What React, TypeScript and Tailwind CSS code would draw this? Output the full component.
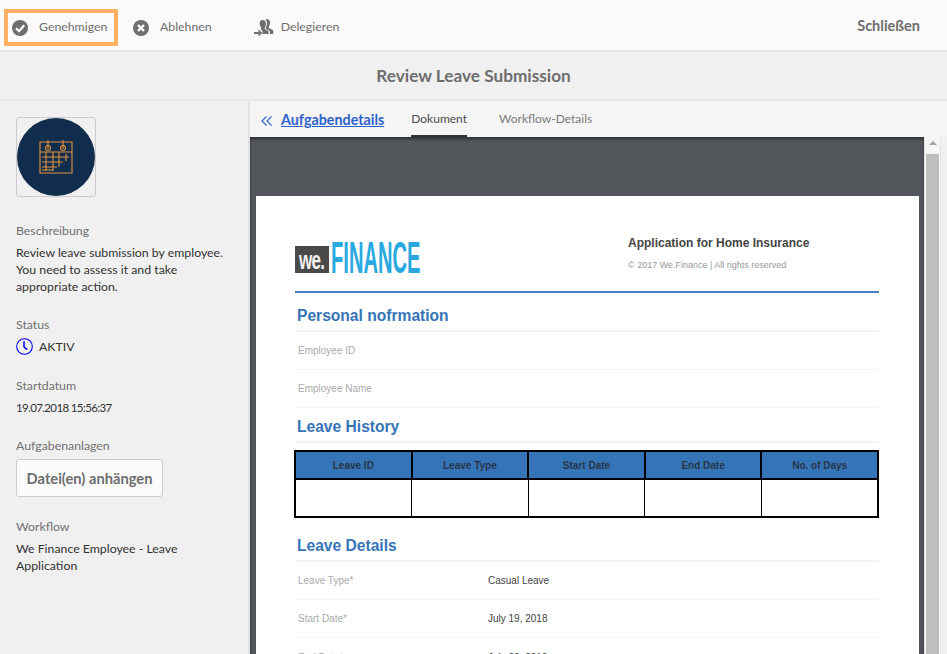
const ui = { fontFamily: 'Lato, "Noto Sans", sans-serif' };
const doc = { fontFamily: '"Liberation Sans", Arial, sans-serif' };

function CheckIcon() {
  return (
    <svg width="16" height="16" viewBox="0 0 16 16">
      <circle cx="8" cy="8" r="8" fill="#6e6e6e" />
      <path d="M4 8.2 7 11.2 12.2 5.2" fill="none" stroke="#fff" strokeWidth="2.2" />
    </svg>
  );
}

function CloseIcon() {
  return (
    <svg width="16" height="16" viewBox="0 0 16 16">
      <circle cx="8" cy="8" r="8" fill="#6e6e6e" />
      <path d="M5 5 11 11M11 5 5 11" fill="none" stroke="#fff" strokeWidth="2.4" />
    </svg>
  );
}

function DelegateIcon() {
  return (
    <svg width="20" height="18" viewBox="0 0 20 18" fill="#6e6e6e">
      <path d="M8.500 1C11 1 12.200 3 12 5.300c-.1 1.400-.7 2.700-1.400 3.500-.2.900.3 1.400 1.200 1.900 1.300.6 2.400 1.100 2.800 1.900V15H8.500v-3L6.500 10.200c.5-.4 1-.7 1-1.400C6.700 8 5.900 6.700 5.700 5.300 5.400 3 6.200 1 8.500 1z" />
      <path d="M12.500 0c2.500 0 3.700 1.800 3.500 4.200-.1 1.400-.7 2.700-1.300 3.500-.2.900.4 1.300 1.200 1.700 1.400.6 2.800 1.200 3.300 2V15h-3.300v-2.500c-.7-1.100-2-1.700-3.300-2.300-.8-.4-1.200-.8-1-1.500.8-1 1.300-2.200 1.400-3.600.1-1.800-.4-3.400-1.600-4.300.2-.5.800-.8 1.600-.8z" />
      <path d="M0 13h4.500v-2.500L8.500 14l-4 3.500V15H0z" />
    </svg>
  );
}

function ClockIcon() {
  return (
    <svg width="17" height="17" viewBox="0 0 17 17" fill="none" stroke="#0000ee">
      <circle cx="8.500" cy="8.500" r="7.800" strokeWidth="1.100" />
      <path d="M8 3.200V9l3.200 2.600" strokeWidth="1.500" />
    </svg>
  );
}

function CalendarIcon() {
  return (
    <svg width="34" height="36" viewBox="0 0 34 36" fill="none" stroke="#e0913f" strokeWidth="1.100">
      <path d="M1 3h32v31H1zM1 13h32" />
      <path d="M9 1v9M24 1v9" />
      <circle cx="9" cy="9" r="2.500" />
      <circle cx="24" cy="9" r="2.500" />
      <path d="M3 18h27M3 23h21M3 28h15M3 31h11M7 13v19M14 13v19M20 13v15M27 15v7" />
    </svg>
  );
}

function Label({ children }: { children: React.ReactNode }) {
  return <div className="text-[12.3px] leading-[17px] text-[#707070]">{children}</div>;
}

const columns = ["Leave ID", "Leave Type", "Start Date", "End Date", "No. of Days"];

function Row({ label, value, line = true }: { label: string; value?: string; line?: boolean }) {
  return (
    <div className={`flex h-[38px] items-center pl-[3px] text-[10px] ${line ? "border-b border-[#f5f5f5]" : ""}`}>
      <div className="w-[190px] text-[#aaaaaa]">{label}</div>
      <div className="text-[#444444]">{value}</div>
    </div>
  );
}

function Heading({ children }: { children: React.ReactNode }) {
  return (
    <div className="flex h-[33px] items-center border-b-2 border-[#f3f3f3] pl-[2px] pt-[2px] text-[15.6px] font-bold text-[#3674b8]">
      {children}
    </div>
  );
}

export default function App() {
  return (
    <div style={ui} className="flex h-[654px] w-[947px] flex-col overflow-hidden bg-[#f0f0f0]">
      <header className="flex h-[52px] shrink-0 items-center border-b-2 border-[#e6e6e6] bg-[#fafafa] pr-[27px] pt-[5px] text-[12.3px] text-[#6e6e6e]">
        <button className="ml-[4px] flex h-[37px] w-[114px] items-center gap-[11px] border-4 border-[#ffb061] pl-[4px]">
          <CheckIcon />
          Genehmigen
        </button>
        <button className="ml-[15px] flex items-center gap-[11px]">
          <CloseIcon />
          Ablehnen
        </button>
        <button className="ml-[42px] flex items-center gap-[7px]">
          <DelegateIcon />
          Delegieren
        </button>
        <button className="-mt-[3px] ml-auto text-[14.5px] font-bold">Schließen</button>
      </header>

      <div className="flex h-[49px] shrink-0 items-center justify-center border-b-2 border-[#e6e6e6] text-[17.2px] font-bold text-[#6e6e6e]">
        Review Leave Submission
      </div>

      <div className="flex min-h-0 flex-1">
        <aside className="w-[250px] shrink-0 border-r-2 border-[#e2e2e2] pl-[16px] pr-[20px] pt-[16px] text-[12.3px] leading-[17px] text-[#323232]">
          <div className="flex h-[80px] w-[80px] items-center justify-center rounded-[3px] border border-[#cccccc]">
            <div className="flex h-[78px] w-[78px] items-center justify-center rounded-full bg-[#112d4e]">
              <CalendarIcon />
            </div>
          </div>

          <div className="mt-[25px]">
            <Label>Beschreibung</Label>
            <p className="mt-[5px]">Review leave submission by employee. You need to assess it and take appropriate action.</p>
          </div>

          <div className="mt-[21px]">
            <Label>Status</Label>
            <div className="mt-[5px] flex items-center gap-[6px]">
              <ClockIcon />
              AKTIV
            </div>
          </div>

          <div className="mt-[22px]">
            <Label>Startdatum</Label>
            <div className="mt-[5px] text-[11.5px] leading-[17px] tracking-[-0.63px]">19.07.2018 15:56:37</div>
          </div>

          <div className="mt-[21px]">
            <Label>Aufgabenanlagen</Label>
            <button className="mt-[5px] h-[38px] w-[147px] rounded-[3px] border border-[#cccccc] bg-[#fafafa] text-[14.7px] font-bold text-[#6e6e6e]">
              Datei(en) anhängen
            </button>
          </div>

          <div className="mt-[21px]">
            <Label>Workflow</Label>
            <p className="mt-[5px]">We Finance Employee - Leave Application</p>
          </div>
        </aside>

        <main className="flex min-w-0 flex-1 flex-col">
          <nav className="flex h-[36px] shrink-0 items-stretch bg-[#f5f5f5] pl-[11px] text-[12px]">
            <div className="flex items-center pt-[2px] text-[#2d62cb]">
              <svg width="12" height="10" viewBox="0 0 12 10" fill="none" stroke="#2d62cb" strokeWidth="1.100" className="mt-[2px]">
                <path d="M5.500.5 1 5l4.500 4.500M10.500.5 6 5l4.500 4.500" />
              </svg>
              <a className="ml-[8px] text-[14.3px] font-bold underline">Aufgabendetails</a>
            </div>
            <div className="ml-[27px] flex h-full items-center border-b-2 border-[#333333] pt-[2px] text-[#4b4b4b]">Dokument</div>
            <div className="ml-[32px] flex items-center text-[#7a7a7a]">Workflow-Details</div>
          </nav>

          <div className="flex min-h-0 flex-1 pr-[6px]">
            <div className="min-w-0 flex-1 overflow-hidden bg-[#53565a] pl-[6px] pr-[5px] pt-[59px] shadow-[inset_0_2px_3px_rgba(0,0,0,0.45)]">
              <div style={doc} className="h-[600px] bg-white pl-[39px] pr-[40px] pt-[46px]">
                <div className="flex h-[51px] items-start border-b-2 border-[#4a7fc1]">
                  <div className="flex h-[32px] w-[333px] items-end">
                    <div className="mb-px flex h-[27px] w-[34px] items-end justify-center overflow-hidden bg-[#4a4a4a] text-[25px] font-bold leading-[25px] text-[#f2f2f2]">
                      <span className="origin-bottom scale-x-[0.68] tracking-[-1px]">we.</span>
                    </div>
                    <div className="ml-[2px] origin-bottom-left scale-x-[0.61] scale-y-[1.32] text-[33px] font-bold leading-[24px] text-[#29a9e0]">
                      FINANCE
                    </div>
                  </div>
                  <div className="-mt-[6px]">
                    <div className="text-[12px] font-bold leading-[14px] text-[#444444]">Application for Home Insurance</div>
                    <div className="mt-[9px] text-[9px] leading-[12px] text-[#999999]">© 2017 We.Finance | All rights reserved</div>
                  </div>
                </div>

                <div className="mt-[6px]">
                  <Heading>Personal nofrmation</Heading>
                  <Row label="Employee ID" />
                  <Row label="Employee Name" />
                </div>

                <div className="mt-[2px]">
                  <Heading>Leave History</Heading>
                  <table className="mt-[7px] -ml-px w-[585px] table-fixed border-collapse border-2 border-black">
                    <thead>
                      <tr className="h-[28px] bg-[#3674b8] text-[10px] font-bold text-[#27364a]">
                        {columns.map((c) => (
                          <th key={c} className="border-2 border-black">{c}</th>
                        ))}
                      </tr>
                    </thead>
                    <tbody>
                      <tr className="h-[38px]">
                        {columns.map((c) => (
                          <td key={c} className="border border-black" />
                        ))}
                      </tr>
                    </tbody>
                  </table>
                </div>

                <div className="mt-[11px]">
                  <Heading>Leave Details</Heading>
                  <Row label="Leave Type*" value="Casual Leave" />
                  <Row label="Start Date*" value="July 19, 2018" />
                  <Row label="End Date*" value="July 20, 2018" line={false} />
                </div>
              </div>
            </div>

            <div className="flex w-[17px] shrink-0 flex-col items-center border-x border-[#e6e6e6] bg-[#f5f5f5] pt-[4px]">
              <div className="h-0 w-0 border-x-[4px] border-b-[4px] border-x-transparent border-b-[#a0a0a0]" />
              <div className="mt-[9px] w-[13px] flex-1 bg-[#bebebe]" />
            </div>
          </div>
        </main>
      </div>
    </div>
  );
}
